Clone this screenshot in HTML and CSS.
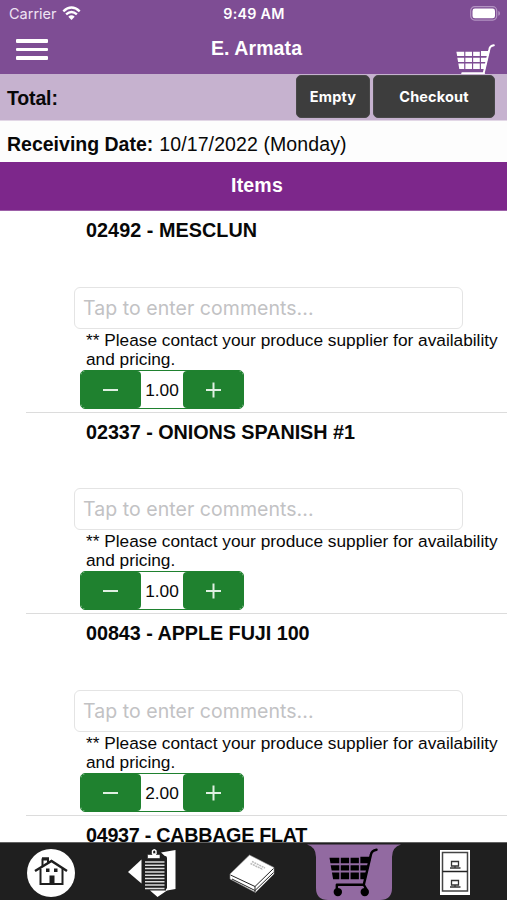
FILE: index.html
```html
<!DOCTYPE html>
<html lang="en">
<head>
<meta charset="utf-8">
<title>E. Armata</title>
<link rel="stylesheet" href="styles.css">
</head>
<body>
<svg class="defs" aria-hidden="true">
  <symbol id="cart" viewBox="0 0 50 50">
    <path d="M.500 10H10.500V15.500H1.500ZM12 10H20.500V15.500H12ZM22 10H30.500V15.500H22ZM32 9H43L41.500 15.500H32ZM1.700 17.500H10.500V23H2.700ZM12 17.500H20.500V23H12ZM22 17.500H30.500V23H22ZM32 17.500H41L39.500 23H32ZM3 25H10.500V32H4.200ZM12 25H20.500V32H12ZM22 25H30.500V32H22ZM32 25H39L37.500 32H32Z" fill="currentColor"/>
    <path d="M48.500 1.700Q43.500 2.500 42.700 7L35.500 37.500H8V41.500M35.500 37.500L38 42" fill="none" stroke="currentColor" stroke-width="2.500" stroke-linejoin="round" stroke-linecap="round"/>
    <circle cx="9" cy="45" r="4.300" fill="currentColor"/><circle cx="36.500" cy="45" r="4.300" fill="currentColor"/>
  </symbol>
</svg>
<div class="screen">
  <header class="top">
    <div class="status">
      <div class="carrier"><span>Carrier</span>
        <svg width="19" height="15" viewBox="0 0 19 15"><path d="M1.300 5.300Q9.500-2.300 17.700 5.300M4.100 8.400Q9.500 3.500 14.900 8.400" fill="none" stroke="#fff" stroke-width="2.400"/><path d="M6.300 10.700Q9.500 8 12.700 10.700L9.500 14Z" fill="#fff"/></svg>
      </div>
      <span class="time">9:49 AM</span>
      <svg class="battery" width="31" height="15" viewBox="0 0 31 15"><rect x=".7" y=".7" width="26" height="13.400" rx="4" fill="none" stroke="#b393c2" stroke-width="1.200"/><rect x="2.500" y="2.500" width="22.500" height="9.800" rx="2.400" fill="#fff"/><path d="M28.300 5Q30 5.500 30 7.400Q30 9.300 28.300 9.800Z" fill="#b393c2"/></svg>
    </div>
    <div class="nav">
      <div class="menu"><i></i><i></i><i></i></div>
      <h1>E. Armata</h1>
      <svg class="navcart"><use href="#cart" width="39" height="39"/></svg>
    </div>
  </header>
  <section class="total"><b>Total:</b><button class="empty">Empty</button><button class="checkout">Checkout</button></section>
  <section class="date"><b>Receiving Date:</b><span>10/17/2022 (Monday)</span></section>
  <h2 class="items-title">Items</h2>
  <main class="list">
    <article class="row">
      <h3>02492 - MESCLUN</h3>
      <div class="comment">Tap to enter comments...</div>
      <p>** Please contact your produce supplier for availability<br>and pricing.</p>
      <div class="stepper"><span class="btn minus"></span><span class="qty">1.00</span><span class="btn plus"></span></div>
    </article>
    <article class="row">
      <h3>02337 - ONIONS SPANISH #1</h3>
      <div class="comment">Tap to enter comments...</div>
      <p>** Please contact your produce supplier for availability<br>and pricing.</p>
      <div class="stepper"><span class="btn minus"></span><span class="qty">1.00</span><span class="btn plus"></span></div>
    </article>
    <article class="row">
      <h3>00843 - APPLE FUJI 100</h3>
      <div class="comment">Tap to enter comments...</div>
      <p>** Please contact your produce supplier for availability<br>and pricing.</p>
      <div class="stepper"><span class="btn minus"></span><span class="qty">2.00</span><span class="btn plus"></span></div>
    </article>
    <article class="row last"><h3>04937 - CABBAGE FLAT</h3></article>
  </main>
  <nav class="tabs">
    <div class="tab">
      <svg width="50" height="50" viewBox="0 0 50 50"><circle cx="25" cy="25" r="24" fill="#fff"/><g fill="none" stroke="#1f1f1f" stroke-width="2"><path d="M9 23L25.500 13L41 23" stroke-width="2.500"/><path d="M14.500 21V36H36.500V21M16.500 18V11.500H22V14.500"/><path d="M16 10.500H23" stroke-width="2.500"/></g><path d="M20 20.500H23.500V24H20ZM28 20.500H31.500V24H28ZM23.500 27.500H28.500V36H23.500Z" fill="#1f1f1f"/></svg>
    </div>
    <div class="tab">
      <svg width="50" height="50" viewBox="0 0 50 50"><path d="M1 24L14.500 11.500V35.500Z" fill="#fff"/><path d="M34 4.500L48.500 2V41L40 42.500L30.500 49L23 42.500H39V9Z" fill="#fff"/><rect x="17" y="8" width="23" height="33.500" rx="2" fill="#1f1f1f"/><path d="M18 14H37.500M18 17.300H37.500M18 20.600H37.500M18 23.900H37.500M18 27.200H37.500M18 30.500H37.500M18 33.800H37.500M18 37.100H37.500M18 40.400H37.500" stroke="#ddd" stroke-width="1.500"/><path d="M20.500 6.500H25C25 4.500 29.500 4.500 29.500 6.500H33V10.500H20.500Z" fill="#fff" stroke="#1f1f1f" stroke-width=".6"/><path d="M25.500 6V3Q27.300.5 29 3V6" fill="none" stroke="#fff" stroke-width="1.400"/></svg>
    </div>
    <div class="tab">
      <svg width="50" height="50" viewBox="0 0 50 50"><path d="M22.500 7L47 19.500V26L28.500 44.500L3 31V26Z" fill="#fff" stroke="#888" stroke-width=".6"/><path d="M3.500 27L28 38.500L46.500 20.500M28 38.500V44M5 31L28 42.500L46.500 24.500" fill="none" stroke="#222" stroke-width="1"/><path d="M25 13.500L38 20M23.500 15.500L36 21.500" stroke="#bbb" stroke-width="1.500" stroke-dasharray="2 .7"/></svg>
    </div>
    <div class="tab active">
      <svg class="tabshape" width="94" height="57" viewBox="0 0 94 57"><path d="M0 1.500H94Q85 4 85 14V45Q85 57 73 57H21Q9 57 9 45V14Q9 4 0 1.500Z" fill="#926aa1"/></svg>
      <svg class="tabcart"><use href="#cart" width="49" height="49"/></svg>
    </div>
    <div class="tab">
      <svg width="30" height="46" viewBox="0 0 30 46"><path d="M0 0H30V45H0Z" fill="#fff"/><path d="M2.500 2.500H27.500V41H2.500Z" fill="none" stroke="#444" stroke-width="1.500"/><path d="M2.500 21.500H27.500" stroke="#222" stroke-width="1.500"/><g fill="none" stroke="#333" stroke-width="1.300"><path d="M11.500 11.500H18.500V16H11.500ZM10 18H20.500M15 16V18"/><path d="M11.500 30.500H18.500V35H11.500ZM10 37H20.500M15 35V37"/></g></svg>
    </div>
  </nav>
</div>
</body>
</html>
```

FILE: styles.css
```css
* { box-sizing: border-box; }
body { margin: 0; background: #fff; }
h1, h2, h3, p { margin: 0; }
.defs { position: absolute; width: 0; height: 0; }
.screen { width: 507px; height: 900px; display: flex; flex-direction: column; overflow: hidden; background: #fff; color: #080808; font-family: "Liberation Sans", Arial, sans-serif; }
.top { height: 74px; flex: none; background: #7e4d94; color: #fff; overflow: hidden; }
.status { height: 27px; display: grid; grid-template-columns: 1fr auto 1fr; align-items: center; padding: 0 6px 0 9px; font: 14.500px/27px Inter, sans-serif; }
.carrier { display: flex; align-items: center; gap: 5px; color: #eee3f3; }
.carrier svg { margin-top: -1px; }
.time { font-size: 14.300px; font-weight: 600; letter-spacing: .25px; padding-right: 2px; }
.battery { justify-self: end; }
.nav { height: 47px; display: grid; grid-template-columns: 1fr auto 1fr; padding: 0 12px 0 18px; }
.menu { display: flex; flex-direction: column; gap: 5px; padding-top: 12px; margin-left: -2px; }
.menu i { width: 32px; height: 3.700px; background: #fff; border-radius: 1px; }
.nav h1 { font-size: 19.500px; line-height: 42px; letter-spacing: .1px; }
.navcart { justify-self: end; width: 39px; height: 39px; margin-top: 17px; }
.total { height: 47px; flex: none; display: flex; align-items: flex-start; padding: 1px 12px 0 7px; background: #c6b2cf; border-bottom: 1px solid #e2d7e6; font-size: 19.500px; line-height: 46px; gap: 3px; letter-spacing: -.15px; }
.total b { flex: 1; }
button { height: 43px; margin: 0; padding: 0; border: 1px solid #484848; border-radius: 5px; background: #3d3d3d; color: #fff; font: 700 14.500px Inter, sans-serif; letter-spacing: .15px; }
.empty { width: 74px; }
.checkout { width: 122px; }
.date { height: 41px; flex: none; display: flex; gap: 6px; padding: 2px 0 0 7px; font-size: 19.500px; line-height: 43px; background: #fdfdfd; }
.date span { letter-spacing: .1px; }
.items-title { height: 49px; flex: none; background: #7d278b; border-bottom: 1px solid #9d60a8; color: #fff; text-align: center; padding-left: 7px; font-size: 19.500px; line-height: 46px; letter-spacing: .2px; }
.list { height: 631px; flex: none; overflow: hidden; }
.row { height: 201.600px; margin-left: 26px; border-bottom: 1px solid #dcdcdc; }
.row h3 { height: 75.700px; padding-left: 60px; font-size: 19.800px; line-height: 38px; letter-spacing: -.05px; white-space: nowrap; }
.row:first-child h3 { letter-spacing: .05px; }
.comment { width: 389px; height: 42px; margin-left: 48px; border: 1px solid #e4e4e4; border-radius: 6px; padding-left: 8px; color: #c2c2c4; font: 19.500px/41px Inter, sans-serif; letter-spacing: .05px; white-space: nowrap; }
.row p { height: 41px; padding: 2px 0 0 60px; font-size: 17.280px; line-height: 19.200px; white-space: nowrap; }
.stepper { display: flex; width: 164px; height: 39px; margin-left: 54px; border: 1px solid #1f812f; border-radius: 5px; background: #fff; overflow: hidden; }
.btn { width: 60px; flex: none; position: relative; background: #1f812f; border-radius: 4px; }
.btn::before, .plus::after { content: ""; position: absolute; left: 22px; top: 18px; width: 15px; height: 2px; background: #dff0e2; }
.plus::before, .plus::after { left: 23px; }
.plus::after { transform: rotate(90deg); }
.qty { flex: 1; text-align: center; font-size: 17.300px; line-height: 38px; }
.row.last { border: 0; }
.row.last h3 { letter-spacing: -.3px; }
.tabs { height: 58px; flex: none; display: grid; grid-template-columns: repeat(5, 1fr); background: #1f1f1f; border-top: 1px solid #626262; }
.tab { display: flex; justify-content: center; padding-top: 5px; min-width: 0; }
.tab:nth-child(2) { padding-right: 1px; }
.tab:nth-child(5) { padding: 7px 2px 0 0; }
.tab:nth-child(3) { padding-right: 3px; }
.tab.active { display: grid; padding: 0 2px 0 0; justify-items: center; }
.active > svg { grid-area: 1 / 1; }
.tabcart { width: 49px; height: 49px; margin-top: 5px; color: #000; }
```
